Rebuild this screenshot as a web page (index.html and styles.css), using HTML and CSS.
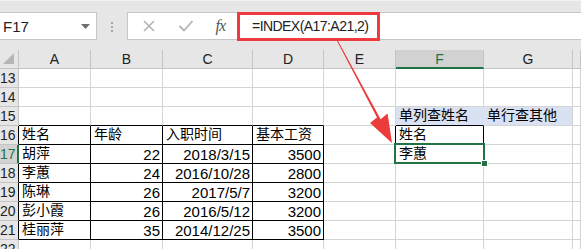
FILE: index.html
```html
<!DOCTYPE html>
<html lang="en">
<head>
    <meta charset="UTF-8">
    <title>INDEX</title>
    <link rel="stylesheet" href="styles.css">
</head>
<body>
    <div class="app">
        <div class="toolbar">
            <div class="namebox">
                <span>F17</span>
                <svg class="drop" width="9" height="5" viewBox="0 0 9 5"><polygon points="0,0 9,0 4.5,5" fill="#6d6d6d"/></svg>
            </div>
            <div class="grip"><i></i><i></i><i></i></div>
            <div class="fbar">
                <div class="fbtns">
                    <svg width="14" height="14" viewBox="0 0 14 14"><path d="M2 2 L12 12 M12 2 L2 12" stroke="#b3b3b3" stroke-width="1.6"/></svg>
                    <svg width="16" height="14" viewBox="0 0 16 14"><path d="M1.5 7 L6 11.5 L14.5 2" stroke="#b3b3b3" stroke-width="1.8" fill="none"/></svg>
                    <span class="fx">fx</span>
                </div>
                <div class="formula">=INDEX(A17:A21,2)</div>
            </div>
        </div>

        <div class="sheet">
            <!-- column headers -->
            <div class="ch corner"><svg width="12" height="12" viewBox="0 0 12 12"><polygon points="11,0 11,11 0,11" fill="#b5b5b5"/></svg></div>
            <div class="ch">A</div>
            <div class="ch">B</div>
            <div class="ch">C</div>
            <div class="ch">D</div>
            <div class="ch">E</div>
            <div class="ch sel">F</div>
            <div class="ch">G</div>
            <div class="ch"></div>

            <!-- 13 -->
            <div class="rh">13</div>
            <div class="c"></div><div class="c"></div><div class="c"></div><div class="c"></div>
            <div class="c"></div><div class="c"></div><div class="c"></div><div class="c"></div>

            <!-- 14 -->
            <div class="rh">14</div>
            <div class="c"></div><div class="c"></div><div class="c"></div><div class="c"></div>
            <div class="c"></div><div class="c"></div><div class="c"></div><div class="c"></div>

            <!-- 15 -->
            <div class="rh">15</div>
            <div class="c above"></div><div class="c above"></div><div class="c above"></div><div class="c above"></div>
            <div class="c"></div>
            <div class="c zh fill above fill-join">单列查姓名</div>
            <div class="c zh fill">单行查其他</div>
            <div class="c"></div>

            <!-- 16 -->
            <div class="rh tb">16</div>
            <div class="c zh b">姓名</div>
            <div class="c zh b">年龄</div>
            <div class="c zh b">入职时间</div>
            <div class="c zh b">基本工资</div>
            <div class="c before"></div>
            <div class="c zh b">姓名</div>
            <div class="c"></div>
            <div class="c"></div>

            <!-- 17 -->
            <div class="rh tb sel">17</div>
            <div class="c zh b">胡萍</div>
            <div class="c b num">22</div>
            <div class="c b num">2018/3/15</div>
            <div class="c b num">3500</div>
            <div class="c"></div>
            <div class="c zh active">李蕙</div>
            <div class="c"></div>
            <div class="c"></div>

            <!-- 18 -->
            <div class="rh tb">18</div>
            <div class="c zh b">李蕙</div>
            <div class="c b num">24</div>
            <div class="c b num">2016/10/28</div>
            <div class="c b num">2800</div>
            <div class="c"></div><div class="c"></div><div class="c"></div><div class="c"></div>

            <!-- 19 -->
            <div class="rh tb">19</div>
            <div class="c zh b">陈琳</div>
            <div class="c b num">26</div>
            <div class="c b num">2017/5/7</div>
            <div class="c b num">3200</div>
            <div class="c"></div><div class="c"></div><div class="c"></div><div class="c"></div>

            <!-- 20 -->
            <div class="rh tb">20</div>
            <div class="c zh b">彭小霞</div>
            <div class="c b num">26</div>
            <div class="c b num">2016/5/12</div>
            <div class="c b num">3200</div>
            <div class="c"></div><div class="c"></div><div class="c"></div><div class="c"></div>

            <!-- 21 -->
            <div class="rh tb">21</div>
            <div class="c zh b">桂丽萍</div>
            <div class="c b num">35</div>
            <div class="c b num">2014/12/25</div>
            <div class="c b num">3500</div>
            <div class="c"></div><div class="c"></div><div class="c"></div><div class="c"></div>

            <!-- 22 -->
            <div class="rh">22</div>
            <div class="c"></div><div class="c"></div><div class="c"></div><div class="c"></div>
            <div class="c"></div><div class="c"></div><div class="c"></div><div class="c"></div>
        </div>

        <!-- annotation arrow over the sheet -->
        <svg class="arrow" width="581" height="249" viewBox="0 0 581 249">
            <polygon points="336.6,40.2 337.4,39.8 380.6,119.2 387.6,113.6 392,143 370,123 377,117.4" fill="#ec3b3b"/>
        </svg>
    </div>
</body>
</html>
```

FILE: styles.css
```css
* {
    margin: 0;
    padding: 0;
    box-sizing: border-box;
}

body {
    width: 581px;
    height: 249px;
    overflow: hidden;
    font-family: 'Liberation Sans', 'Noto Sans CJK SC', sans-serif;
    background: #fff;
}

.app {
    position: relative;
    width: 581px;
    height: 249px;
    overflow: hidden;
}

/* Formula bar strip */
.toolbar {
    display: flex;
    height: 50px;
    padding: 12px 0 10px;
    background: #e6e6e6;
    border-top: 1px solid #f2f2f2;
}

.namebox {
    width: 97px;
    height: 28px;
    margin-top: -1px;
    background: #fff;
    border: 1px solid #c6c6c6;
    border-left: none;
    display: flex;
    align-items: center;
    justify-content: space-between;
    padding: 0 6px 0 3px;
    font-size: 15px;
    color: #222;
}

.namebox .drop {
    margin-top: 1px;
}

.grip {
    width: 30px;
    display: flex;
    flex-direction: column;
    align-items: center;
    justify-content: center;
    gap: 2px;
}

.grip i {
    width: 2px;
    height: 2px;
    background: #a6a6a6;
}

.fbar {
    flex: 1;
    display: flex;
    height: 28px;
    margin-top: -1px;
    background: #fff;
    border-top: 1px solid #c6c6c6;
    border-bottom: 1px solid #c6c6c6;
}

.fbtns {
    width: 110px;
    display: flex;
    align-items: center;
    justify-content: space-between;
    padding: 0 12px 0 14px;
    border-left: 1px solid #c6c6c6;
}

.fx {
    font-family: 'Liberation Serif', serif;
    font-style: italic;
    font-size: 16px;
    color: #555;
    letter-spacing: -1px;
}

.formula {
    width: 143px;
    height: 29px;
    margin-top: -1px;
    border: 3px solid #ef3b3d;
    padding: 3px 0 0 12px;
    font-size: 14px;
    letter-spacing: -0.55px;
    color: #222;
    white-space: nowrap;
}

/* Worksheet grid */
.sheet {
    display: grid;
    grid-template-columns: 19px 72px 72px 90px 71px 72px 88px 89px 8px;
    grid-template-rows: repeat(11, 19px);
    font-size: 15px;
    color: #000;
}

.ch {
    background: #e6e6e6;
    border-right: 1px solid #c4c4c4;
    border-bottom: 1px solid #c4c4c4;
    text-align: center;
    font-size: 14px;
    line-height: 18px;
    color: #222;
}

.ch.corner {
    display: flex;
    align-items: flex-end;
    justify-content: flex-end;
    padding: 0 3px 3px 0;
}

.ch.sel {
    background: #d2d2d2;
    color: #217346;
    border-bottom: 2px solid #217346;
}

.rh {
    background: #e6e6e6;
    border-right: 1px solid #c4c4c4;
    border-bottom: 1px solid #c4c4c4;
    font-size: 14px;
    line-height: 18px;
    text-align: right;
    padding-right: 5px;
    color: #222;
    overflow: hidden;
    white-space: nowrap;
}

.rh.tb {
    border-right-color: #000;
}

.rh.sel {
    background: #d2d2d2;
    color: #217346;
    border-right: 2px solid #217346;
}

.c {
    border-right: 1px solid #d4d4d4;
    border-bottom: 1px solid #d4d4d4;
    padding: 1px 3px 0;
    line-height: 17px;
    white-space: nowrap;
    overflow: hidden;
}

.c.zh {
    font-size: 14px;
    padding-top: 0;
}

.c.num {
    text-align: right;
    padding-right: 2px;
}

.c.b {
    border-right-color: #000;
    border-bottom-color: #000;
}

.c.above {
    border-bottom-color: #000;
}

.c.before {
    border-right-color: #000;
}

.c.fill {
    background: #d9e1f2;
}

.c.fill-join {
    border-right-color: #d9e1f2;
}

.c.active {
    position: relative;
    overflow: visible;
}

.c.active::before {
    content: "";
    position: absolute;
    left: -2px;
    top: -2px;
    right: -2px;
    bottom: -1px;
    border: 2px solid #217346;
}

.c.active::after {
    content: "";
    position: absolute;
    right: -4px;
    bottom: -3px;
    width: 5px;
    height: 5px;
    background: #217346;
    border: 1px solid #fff;
    box-sizing: content-box;
    margin: -1px;
}

.arrow {
    position: absolute;
    left: 0;
    top: 0;
    pointer-events: none;
}
```
